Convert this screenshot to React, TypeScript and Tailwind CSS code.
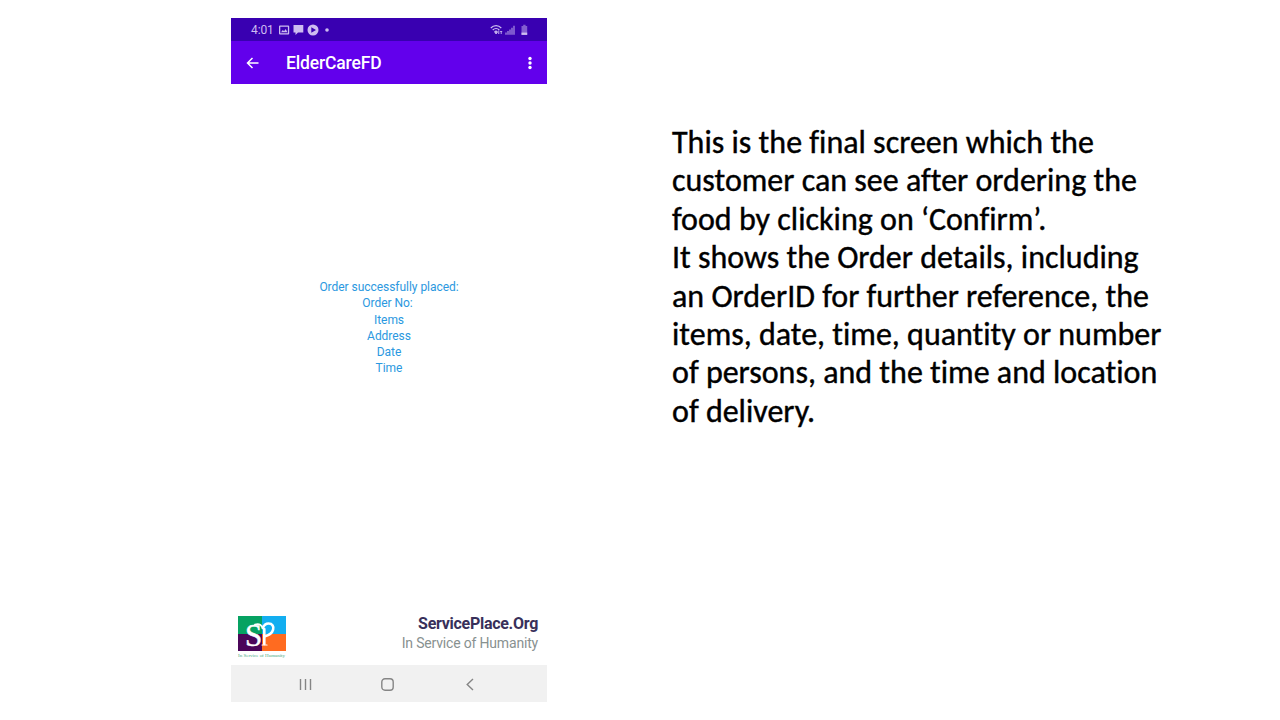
const description = [
  "This is the final screen which the",
  "customer can see after ordering the",
  "food by clicking on ‘Confirm’.",
  "It shows the Order details, including",
  "an OrderID for further reference, the",
  "items, date, time, quantity or number",
  "of persons, and the time and location",
  "of delivery.",
];

const orderFields = ["Order successfully placed:", "Order No: ", "Items", "Address", "Date", "Time"];

function StatusBar() {
  return (
    <div className="flex h-[23px] items-center bg-[#3900b1] pl-5 pr-[19px] text-[#cdbcf0]">
      <span className="w-[28px] text-[12px] leading-none tracking-[-0.1px]">4:01</span>
      <svg width="50" height="12" viewBox="0 0 50 12" fill="currentColor">
        <path fillRule="evenodd" d="M1 1.5h8.2a1 1 0 0 1 1 1v7a1 1 0 0 1-1 1H1a1 1 0 0 1-1-1v-7a1 1 0 0 1 1-1ZM1.300 2.800v6.400h7.600V2.800ZM2 8.300l1.800-2.400 1.300 1.400L6.700 5l1.700 3.300Z" />
        <path d="M14.500 1h9.800v7.500H19L16.500 11V8.500h-2Z" />
        <path fillRule="evenodd" d="M34 .5a5.500 5.500 0 1 1 0 11 5.500 5.500 0 0 1 0-11ZM32.300 3.300v5.400L37 6Z" />
        <circle cx="48" cy="6" r="1.800" />
      </svg>
      <svg className="ml-auto" width="38" height="12" viewBox="0 0 38 12" fill="none" stroke="currentColor">
        <path d="M.8 4c3-3.100 7.500-3.100 10.500 0M2.700 6c2-2 4.800-2 6.600 0M4.500 7.800c1-1 2-1 3 0" strokeWidth="1.200" />
        <path d="m4.800 8.500 1.300 1.500 1.200-1.500ZM8.800 6.500v3.200m-1-1.100 1 1.100M11.200 10V7m-1 1 1-1 1 1" strokeWidth=".9" />
        <path d="M16 8.500v2.300M18 7v3.800M20 5.500v5.300M22 3.800v7M24 1.800v9" strokeWidth="1.100" opacity=".85" />
        <path d="M31.500 2h1.700V.8h2.400V2h1.600v8.800h-5.700Z" fill="currentColor" stroke="none" opacity=".5" />
        <path d="M31.500 8.600h5.700v2.300h-5.700Z" fill="currentColor" stroke="none" />
      </svg>
    </div>
  );
}

function AppBar() {
  return (
    <div className="flex h-[43px] items-center bg-[#6200ec] pl-[15px] pr-3 text-white">
      <svg width="13" height="12" viewBox="0 0 13 12" fill="none" stroke="currentColor" strokeWidth="1.500">
        <path d="M12.500 6H1.500M6.500 1 1.500 6l5 5" />
      </svg>
      <h1 className="ml-[27px] pt-[3px] text-[17.500px] font-medium leading-none tracking-[-0.150px]">ElderCareFD</h1>
      <svg className="ml-auto" width="10" height="14" viewBox="0 0 10 14" fill="currentColor">
        <circle cx="5" cy="2.500" r="1.700" />
        <circle cx="5" cy="7" r="1.700" />
        <circle cx="5" cy="11.500" r="1.700" />
      </svg>
    </div>
  );
}

function Logo() {
  return (
    <svg width="50" height="43" viewBox="0 0 50 43">
      <path fill="#06a262" d="M1 1h24v18H1z" />
      <path fill="#13aef0" d="M25 1h24v18H25z" />
      <path fill="#4b0659" d="M1 19h24v17H1z" />
      <path fill="#ff6b20" d="M25 19h24v17H25z" />
      <text x="8" y="30.500" fill="#fff" className="font-['Liberation_Serif',serif] text-[31px]" stroke="#fff" strokeWidth=".5">S</text>
      <g fill="none" stroke="#fff" strokeLinecap="round">
        <path d="M18 9.500c3.500-1.200 6.200.2 7.800 3.500" strokeWidth="1.800" />
        <path d="M25.800 13c1.200-3 3.300-4.500 5.700-4.500 3.900 0 5.600 3 4.600 6.200-.8 2.800-3.800 5.500-8 6.600" strokeWidth="2.600" />
        <path d="M27.300 14v15" strokeWidth="2.600" />
        <path d="M25 30h5" strokeWidth="1.200" />
      </g>
      <text x="1" y="41.500" fill="#3fa983" textLength="47" className="font-['Liberation_Serif',serif] text-[5px]">In Service of Humanity</text>
    </svg>
  );
}

function NavigationBar() {
  return (
    <div className="flex h-[37px] items-center bg-[#f1f1f1] pl-[68px] pt-px text-[#858585]">
      <svg width="13" height="13" viewBox="0 0 13 13" fill="none" stroke="currentColor" strokeWidth="1.400">
        <path d="M1.500 1v11M6.500 1v11M11.500 1v11" />
      </svg>
      <svg className="ml-[69px]" width="13" height="13" viewBox="0 0 13 13" fill="none" stroke="currentColor" strokeWidth="1.400">
        <rect x=".8" y=".8" width="11.400" height="11.400" rx="3.200" />
      </svg>
      <svg className="ml-[72px]" width="8" height="13" viewBox="0 0 8 13" fill="none" stroke="currentColor" strokeWidth="1.400">
        <path d="M7 1 1.200 6.500 7 12" />
      </svg>
    </div>
  );
}

export default function App() {
  return (
    <main className="flex h-[720px] w-[1280px] overflow-hidden bg-white pl-[231px] pt-[18px] font-['Roboto',sans-serif]">
      <section className="flex h-[684px] w-[316px] flex-col">
        <StatusBar />
        <AppBar />
        <div className="flex-1 whitespace-pre pt-[195px] text-center text-[12px] leading-[16.250px] tracking-[-0.040px] text-[#2b98e0]">
          {orderFields.map((field) => (
            <p key={field}>{field}</p>
          ))}
        </div>
        <footer className="flex h-[50px] justify-between pl-[6px] pr-[9px]">
          <Logo />
          <div className="text-right">
            <p className="text-[16px] font-bold leading-[17px] tracking-[-0.280px] text-[#38305a]">ServicePlace.Org</p>
            <p className="mt-[3px] text-[14px] leading-[17px] tracking-[-0.180px] text-[#889190]">In Service of Humanity</p>
          </div>
        </footer>
        <NavigationBar />
      </section>
      <section className="ml-[125px] mt-[106px] whitespace-nowrap font-['Carlito','Lato',sans-serif] text-[32px] leading-[38.400px] text-black [font-variant-ligatures:none] [-webkit-text-stroke:0.4px_black]">
        {description.map((line) => (
          <p key={line}>{line}</p>
        ))}
      </section>
    </main>
  );
}
